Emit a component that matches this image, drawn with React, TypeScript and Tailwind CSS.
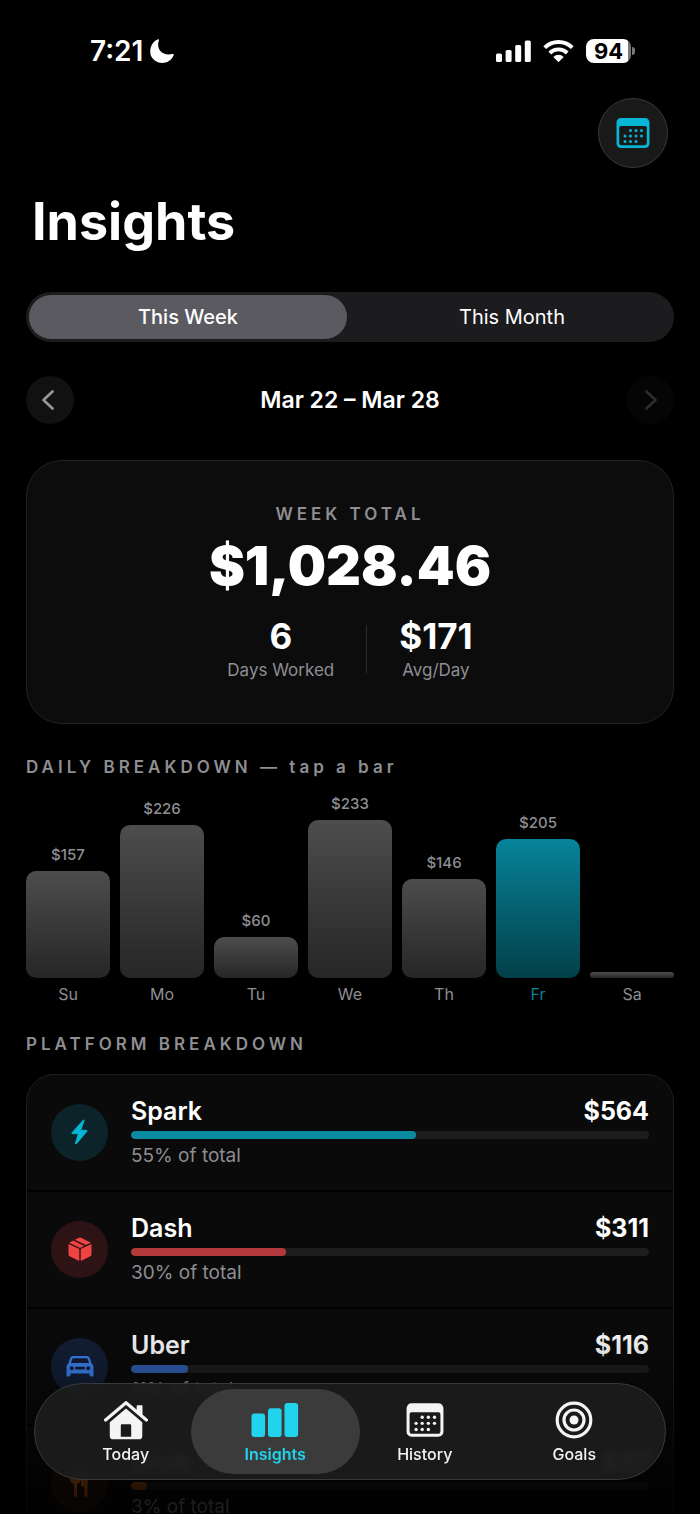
import { useState } from 'react';
import type { ReactNode } from 'react';

type Day = { label: string; amount: number; height: number };
type Platform = {
  name: string;
  total: number;
  share: number;
  bar: string;
  badge: string;
  icon: ReactNode;
};

const days: Day[] = [
  { label: 'Su', amount: 157, height: 107 },
  { label: 'Mo', amount: 226, height: 153 },
  { label: 'Tu', amount: 60, height: 41 },
  { label: 'We', amount: 233, height: 158 },
  { label: 'Th', amount: 146, height: 99 },
  { label: 'Fr', amount: 205, height: 139 },
  { label: 'Sa', amount: 0, height: 6 },
];

function CalendarIcon({ className }: { className: string }) {
  const dots = [
    [14.5, 12.5], [20, 12.5], [25.5, 12.5],
    [9, 18], [14.5, 18], [20, 18], [25.5, 18],
    [9, 23.5], [14.5, 23.5], [20, 23.5],
  ];
  return (
    <svg viewBox="0 0 34 30" className={className} fill="currentColor" aria-hidden="true">
      <path
        fillRule="evenodd"
        d="M5 0h24A4.500 4.500 0 0 1 33.500 4.500v21a4.500 4.500 0 0 1-4.500 4.500h-24a4.500 4.500 0 0 1-4.500-4.500V4.500a4.500 4.500 0 0 1 4.500-4.500ZM5 8a1.800 1.800 0 0 0-1.800 1.800v15.200A2.300 2.300 0 0 0 5.500 27.300h23A2.300 2.300 0 0 0 30.800 25V9.800a1.800 1.800 0 0 0-1.800-1.800Z"
      />
      {dots.map(([x, y]) => (
        <circle key={`${x}-${y}`} cx={x} cy={y} r="1.5" />
      ))}
    </svg>
  );
}

function BoltIcon() {
  return (
    <svg viewBox="0 0 17 26" className="h-[26px] w-[17px] text-[#06b6d4]" fill="currentColor" aria-hidden="true">
      <path
        d="M12.100 1.200 1 13.700c-.4.5-.1 1 .5 1h5.800L4.400 24.300c-.2.8.5 1 1 .5L16 12.200c.4-.5.200-1-.5-1H9.800l3.300-9.500c.3-.8-.5-1.100-1-.5Z"
        stroke="currentColor"
        strokeWidth=".8"
        strokeLinejoin="round"
      />
    </svg>
  );
}

function BoxIcon() {
  return (
    <svg viewBox="0 0 24 26" className="h-[26px] w-6 text-[#ef4444]" fill="currentColor" aria-hidden="true">
      <path d="M.5 8 11.300 13.100v11.900L2 20.600a2.400 2.400 0 0 1-1.500-2.300Z" />
      <path d="M23.500 8 12.700 13.100v11.900l9.300-4.400a2.400 2.400 0 0 0 1.500-2.300Z" />
      <path d="M1.200 6.700 5.300 4.600 16.300 9.900 12 11.900Z" />
      <path d="m6.900 3.800 3.900-2a2.700 2.700 0 0 1 2.400 0l9.600 4.900-4.900 2.400Z" />
    </svg>
  );
}

function CarIcon() {
  return (
    <svg viewBox="0 0 28 22" className="h-[22px] w-7 text-[#3b82f6]" fill="currentColor" aria-hidden="true">
      <path
        fillRule="evenodd"
        d="M7.500 1h13c1.700 0 2.900.8 3.500 2.400l1.700 5c1.100.8 1.800 1.900 1.800 3.500v8.300c0 .8-.5 1.300-1.300 1.300h-1.400c-.8 0-1.300-.5-1.300-1.300v-1.700h-19v1.700c0 .8-.5 1.300-1.300 1.300H1.800c-.8 0-1.300-.5-1.300-1.300v-8.300c0-1.600.7-2.700 1.800-3.500l1.700-5C4.600 1.800 5.800 1 7.500 1Zm.3 2.200c-.9 0-1.400.3-1.700 1.200L5 7.900h18l-1.100-3.500c-.3-.9-.8-1.200-1.700-1.200Zm-2 8a2 2 0 1 0 0 4 2 2 0 0 0 0-4Zm16.400 0a2 2 0 1 0 0 4 2 2 0 0 0 0-4Zm-11.800.6a1.400 1.400 0 0 0 0 2.800h7.200a1.400 1.400 0 0 0 0-2.800Z"
      />
    </svg>
  );
}

function ForkKnifeIcon() {
  return (
    <svg viewBox="0 0 24 28" className="h-7 w-6 text-[#f97316]" fill="none" stroke="currentColor" strokeWidth="3" strokeLinecap="round" aria-hidden="true">
      <path d="M3.500 2v7.500a4 4 0 0 0 8 0V2M7.500 2v24.500M18 26.500V3c-3 2-3.800 7-3.500 13H18" />
    </svg>
  );
}

function HomeIcon() {
  return (
    <svg viewBox="0 0 44 40" className="h-10 w-11" fill="currentColor" aria-hidden="true">
      <path d="M1.600 20 22 2.700 42.400 20" fill="none" stroke="currentColor" strokeWidth="3.200" strokeLinecap="round" strokeLinejoin="round" />
      <path d="M33.500 5.300h4.200c.5 0 .8.300.8.800v10.300l-5.800-5V6.100c0-.5.300-.8.800-.8Z" />
      <path fillRule="evenodd" d="M22 8.500 38.300 22.300v13.600a3.400 3.400 0 0 1-3.400 3.400H9.200a3.400 3.400 0 0 1-3.400-3.400V22.300Zm-4.200 15.800a1 1 0 0 0-1 1v11.400h10.400V25.300a1 1 0 0 0-1-1Z" />
    </svg>
  );
}

function BarsIcon() {
  return (
    <svg viewBox="0 0 48 36" className="h-9 w-12" fill="currentColor" aria-hidden="true">
      <rect x="0.500" y="11.500" width="13.600" height="23.500" rx="3" />
      <rect x="17" y="6.300" width="13.600" height="28.700" rx="3" />
      <rect x="33.500" y="1" width="13.600" height="34" rx="3" />
    </svg>
  );
}

function TargetIcon() {
  return (
    <svg viewBox="0 0 38 38" className="size-[38px]" fill="none" stroke="currentColor" strokeWidth="3.200" aria-hidden="true">
      <circle cx="19" cy="19" r="16.800" />
      <circle cx="19" cy="19" r="10" />
      <circle cx="19" cy="19" r="4.500" fill="currentColor" stroke="none" />
    </svg>
  );
}

function ChevronIcon({ d }: { d: string }) {
  return (
    <svg viewBox="0 0 12 20" className="h-5 w-3" fill="none" stroke="currentColor" strokeWidth="2.600" strokeLinecap="round" strokeLinejoin="round" aria-hidden="true">
      <path d={d} />
    </svg>
  );
}

const platforms: Platform[] = [
  { name: 'Spark', total: 564, share: 55, bar: 'bg-[#0a8aa1]', badge: 'bg-[#0b2329]', icon: <BoltIcon /> },
  { name: 'Dash', total: 311, share: 30, bar: 'bg-[#b3393b]', badge: 'bg-[#2d1314]', icon: <BoxIcon /> },
  { name: 'Uber', total: 116, share: 11, bar: 'bg-[#305fb2]', badge: 'bg-[#131f36]', icon: <CarIcon /> },
  { name: 'Grub', total: 37, share: 3, bar: 'bg-[#b9590f]', badge: 'bg-[#2b180b]', icon: <ForkKnifeIcon /> },
];

const tabs = [
  { name: 'Today', icon: <HomeIcon /> },
  { name: 'Insights', icon: <BarsIcon /> },
  { name: 'History', icon: <CalendarIcon className="h-[34px] w-[38px]" /> },
  { name: 'Goals', icon: <TargetIcon /> },
];

function StatusBar() {
  return (
    <div className="flex h-[30px] items-center justify-between pr-[39px] pl-16">
      <div className="flex items-center gap-1.5">
        <span className="text-[28px] leading-[30px] font-semibold">7:21</span>
        <svg viewBox="0 0 24 24" className="size-[26px]" fill="currentColor" aria-hidden="true">
          <path d="M8.300 1.200c.7-.3 1.200.2.900.9C6.500 8.900 11 17.200 21.700 14.800c.9-.2 1.500.3 1.100 1.100C18.700 25.600 5.300 25.200 1.600 16 .1 10.200 2.300 3.700 8.300 1.200Z" />
        </svg>
      </div>
      <div className="flex items-center gap-3">
        <svg viewBox="0 0 35 22" className="h-[22px] w-[35px]" fill="currentColor" aria-hidden="true">
          <rect x="0" y="13.500" width="6" height="8.500" rx="1.600" />
          <rect x="9.600" y="10" width="6" height="12" rx="1.600" />
          <rect x="19.200" y="5" width="6" height="17" rx="1.600" />
          <rect x="28.800" y="0.500" width="6" height="21.500" rx="1.600" />
        </svg>
        <svg viewBox="0 0 31 22" className="h-[22px] w-[31px]" fill="none" stroke="currentColor" strokeWidth="3.900" aria-hidden="true">
          <path d="M1.700 7.700a19.500 19.500 0 0 1 27.600 0M6.800 13a12.300 12.300 0 0 1 17.400 0" />
          <path d="M10.300 17a7.400 7.400 0 0 1 10.400 0l-4.500 4.600a1 1 0 0 1-1.400 0Z" fill="currentColor" stroke="none" />
        </svg>
        <div className="flex items-center gap-px">
          <div className="flex h-6 w-[45px] items-center justify-center rounded-lg bg-linear-to-r from-white from-94% to-[#777] to-94% text-[22px] leading-6 font-bold text-black">
            94
          </div>
          <div className="h-2 w-[3px] rounded-r-full bg-[#777]" />
        </div>
      </div>
    </div>
  );
}

function SectionTitle({ children, className }: { children: ReactNode; className: string }) {
  return (
    <h2 className={`text-[17px] leading-6 font-semibold tracking-[4px] text-[#8e8e93] ${className}`}>{children}</h2>
  );
}

export default function App() {
  const [range, setRange] = useState('This Week');
  const [selectedDay, setSelectedDay] = useState('Fr');
  const [tab, setTab] = useState('Insights');

  return (
    <div className="relative h-screen overflow-hidden bg-black font-[Inter,sans-serif] text-white">
      <main className="h-full overflow-y-auto px-[26px] pt-9 pb-36 [scrollbar-width:none]">
        <StatusBar />

        <div className="mt-8 flex justify-end pr-1.5">
          <button
            aria-label="Choose dates"
            className="flex size-[70px] items-center justify-center rounded-full border border-[#3a3a3a] bg-[#191919] text-[#06b6d4]"
          >
            <CalendarIcon className="h-[30px] w-[34px]" />
          </button>
        </div>

        <h1 className="mt-6 pl-1.5 text-[52px] leading-[60px] font-bold">Insights</h1>

        <div role="tablist" className="mt-10 grid h-[50px] grid-cols-2 gap-1.5 rounded-full bg-[#1c1c1e] p-[3px]">
          {['This Week', 'This Month'].map((name) => (
            <button
              key={name}
              role="tab"
              aria-selected={range === name}
              onClick={() => setRange(name)}
              className={`rounded-full text-[20px] leading-6 ${range === name ? 'bg-[#5b5a60] font-medium' : 'font-normal'}`}
            >
              {name}
            </button>
          ))}
        </div>

        <div className="mt-[34px] flex items-center justify-between">
          <button aria-label="Previous week" className="flex size-12 items-center justify-center rounded-full bg-[#111111] pr-1 text-[#98989d]">
            <ChevronIcon d="M10.500 1.500 1.500 10l9 8.500" />
          </button>
          <p className="text-[23px] leading-7 font-semibold">Mar 22 – Mar 28</p>
          <button aria-label="Next week" disabled className="flex size-12 items-center justify-center rounded-full bg-[#050505] pl-0.5 text-[#2e2e30]">
            <ChevronIcon d="m1.500 1.500 9 8.500-9 8.500" />
          </button>
        </div>

        <section className="mt-9 flex flex-col items-center rounded-[36px] border border-[#222224] bg-[#0c0c0c] py-[41px]">
          <SectionTitle className="">WEEK TOTAL</SectionTitle>
          <p className="mt-2.5 text-[54px] leading-[60px] font-black">$1,028.46</p>
          <dl className="mt-5 flex items-center gap-8 text-center">
            <div className="flex flex-col-reverse gap-0.5">
              <dt className="text-[17px] leading-6 text-[#8e8e93]">Days Worked</dt>
              <dd className="text-[35px] leading-10 font-bold">6</dd>
            </div>
            <div className="h-12 w-px bg-[#2c2c2e]" />
            <div className="flex flex-col-reverse gap-0.5">
              <dt className="text-[17px] leading-6 text-[#8e8e93]">Avg/Day</dt>
              <dd className="text-[35px] leading-10 font-bold">$171</dd>
            </div>
          </dl>
        </section>

        <SectionTitle className="mt-[31px]">DAILY BREAKDOWN — tap a bar</SectionTitle>

        <div className="mt-[15px] grid grid-cols-7 items-end gap-2.5">
          {days.map((day) => {
            const selected = day.label === selectedDay;
            return (
              <button key={day.label} onClick={() => setSelectedDay(day.label)} className="flex flex-col items-stretch text-center">
                {day.amount > 0 && (
                  <span className="text-[15px] leading-5 font-medium text-[#8e8e93]">${day.amount}</span>
                )}
                <span
                  className={`mt-1.5 rounded-[10px] bg-linear-to-b ${selected ? 'from-[#07849a] to-[#034049]' : 'from-[#4d4d4d] to-[#262626]'}`}
                  style={{ height: day.height }}
                />
                <span className={`mt-1.5 text-[16px] leading-5 ${selected ? 'text-[#078298]' : 'text-[#8e8e93]'}`}>{day.label}</span>
              </button>
            );
          })}
        </div>

        <SectionTitle className="mt-7">PLATFORM BREAKDOWN</SectionTitle>

        <ul className="mt-[18px] rounded-[28px] border border-[#1e1e20] bg-[#0a0a0a]">
          {platforms.map((p) => (
            <li key={p.name} className="flex items-center gap-[23px] border-b-2 border-black px-6 pt-[21px] pb-[22px] last:border-b-0">
              <div className={`flex size-[57px] shrink-0 items-center justify-center rounded-full ${p.badge}`}>{p.icon}</div>
              <div className="min-w-0 flex-1">
                <div className="flex justify-between text-[25px] leading-[30px]">
                  <span className="font-semibold">{p.name}</span>
                  <span className="font-bold">${p.total}</span>
                </div>
                <div className="mt-[5px] h-2 overflow-hidden rounded-full bg-[#1d1d1d]">
                  <div className={`h-full rounded-full ${p.bar}`} style={{ width: `${p.share}%` }} />
                </div>
                <p className="mt-[5px] text-[19px] leading-6 text-[#8e8e93]">{p.share}% of total</p>
              </div>
            </li>
          ))}
        </ul>
      </main>

      <div className="pointer-events-none absolute inset-x-0 bottom-0 h-60 bg-linear-to-b from-transparent from-20% via-black/25 via-45% to-black/80 to-90%" />

      <nav
        aria-label="Main"
        className="absolute inset-x-[34px] bottom-[34px] grid h-[97px] grid-cols-4 rounded-full border border-[#3a3a3a] bg-[#1d1d1d]/90 px-4 py-[5px] backdrop-blur-[3px]"
      >
        {tabs.map(({ name, icon }) => {
          const active = name === tab;
          return (
            <button
              key={name}
              aria-current={active ? 'page' : undefined}
              onClick={() => setTab(name)}
              className={`flex flex-col items-center rounded-full pt-[11px] text-[16px] leading-5 ${active ? '-mx-2.5 bg-[#3b3b3b] font-semibold text-[#22d3ee]' : 'font-medium text-[#f4f4f4]'}`}
            >
              <span className="flex h-10 items-center justify-center">{icon}</span>
              <span className="mt-1">{name}</span>
            </button>
          );
        })}
      </nav>
    </div>
  );
}
